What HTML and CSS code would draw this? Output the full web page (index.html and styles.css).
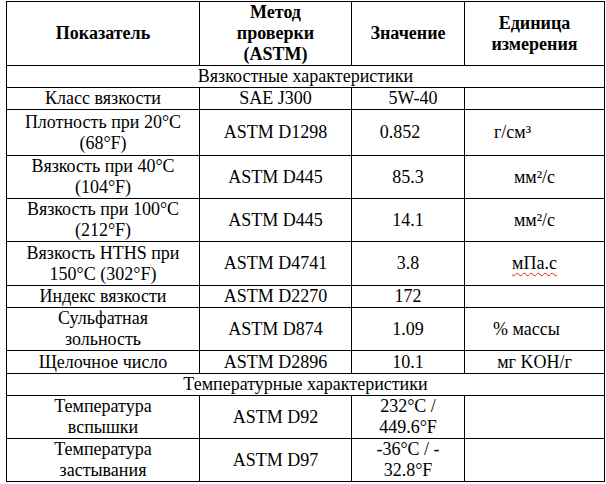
FILE: index.html
```html
<!DOCTYPE html>
<html lang="ru">
<head>
<meta charset="utf-8">
<link rel="stylesheet" href="styles.css">
</head>
<body>
<table class="spec">
  <colgroup>
    <col class="c1"><col class="c2"><col class="c3"><col class="c4">
  </colgroup>
  <tr class="head">
    <th>Показатель</th>
    <th>Метод<br>проверки<br>(ASTM)</th>
    <th>Значение</th>
    <th>Единица<br>измерения</th>
  </tr>
  <tr class="h21"><td colspan="4" class="section">Вязкостные характеристики</td></tr>
  <tr class="h22"><td>Класс вязкости</td><td>SAE J300</td><td class="nudge-r">5W-40</td><td></td></tr>
  <tr class="h46"><td>Плотность при 20°C<br>(68°F)</td><td>ASTM D1298</td><td class="nudge-l">0.852</td><td class="nudge-ll">г/см³</td></tr>
  <tr class="h43"><td>Вязкость при 40°C<br>(104°F)</td><td>ASTM D445</td><td>85.3</td><td>мм²/с</td></tr>
  <tr class="h43"><td>Вязкость при 100°C<br>(212°F)</td><td>ASTM D445</td><td>14.1</td><td>мм²/с</td></tr>
  <tr class="h44"><td>Вязкость HTHS при<br>150°C (302°F)</td><td>ASTM D4741</td><td>3.8</td><td><span class="spell">мПа.с</span></td></tr>
  <tr class="h22"><td>Индекс вязкости</td><td>ASTM D2270</td><td>172</td><td></td></tr>
  <tr class="h43"><td>Сульфатная<br>зольность</td><td>ASTM D874</td><td>1.09</td><td class="nudge-l">% массы</td></tr>
  <tr class="h23"><td>Щелочное число</td><td>ASTM D2896</td><td>10.1</td><td>мг KOH/г</td></tr>
  <tr class="h22"><td colspan="4" class="section">Температурные характеристики</td></tr>
  <tr class="h43"><td>Температура<br>вспышки</td><td>ASTM D92</td><td>232°C /<br>449.6°F</td><td></td></tr>
  <tr class="h43"><td>Температура<br>застывания</td><td>ASTM D97</td><td>-36°C / -<br>32.8°F</td><td></td></tr>
</table>
</body>
</html>
```
FILE: styles.css
```css
html, body {
  margin: 0;
  padding: 0;
  background: #ffffff;
}
body {
  padding: 1px 0 0 6px;
}
.spec {
  border-collapse: collapse;
  table-layout: fixed;
  width: 598px;
  font-family: "Liberation Serif", "Times New Roman", Times, serif;
  font-size: 18px;
  line-height: 21px;
  color: #000;
}
.c1 { width: 193px; }
.c2 { width: 152px; }
.c3 { width: 113px; }
.c4 { width: 140px; }
.spec th, .spec td {
  border: 1px solid #000;
  padding: 0;
  text-align: center;
  vertical-align: middle;
}
.spec th {
  font-weight: bold;
}
.head { height: 64px; }
.h21 { height: 21px; }
.h22 { height: 22px; }
.h23 { height: 23px; }
.h43 { height: 43px; }
.h44 { height: 44px; }
.h46 { height: 46px; }
.spec td.nudge-r { padding-left: 10px; }
.spec td.nudge-l { padding-right: 16px; }
.spec td.nudge-ll { padding-right: 44px; }
.spell {
  text-decoration: underline wavy #e02020;
  text-decoration-thickness: 1px;
  text-underline-offset: 3px;
}
```
